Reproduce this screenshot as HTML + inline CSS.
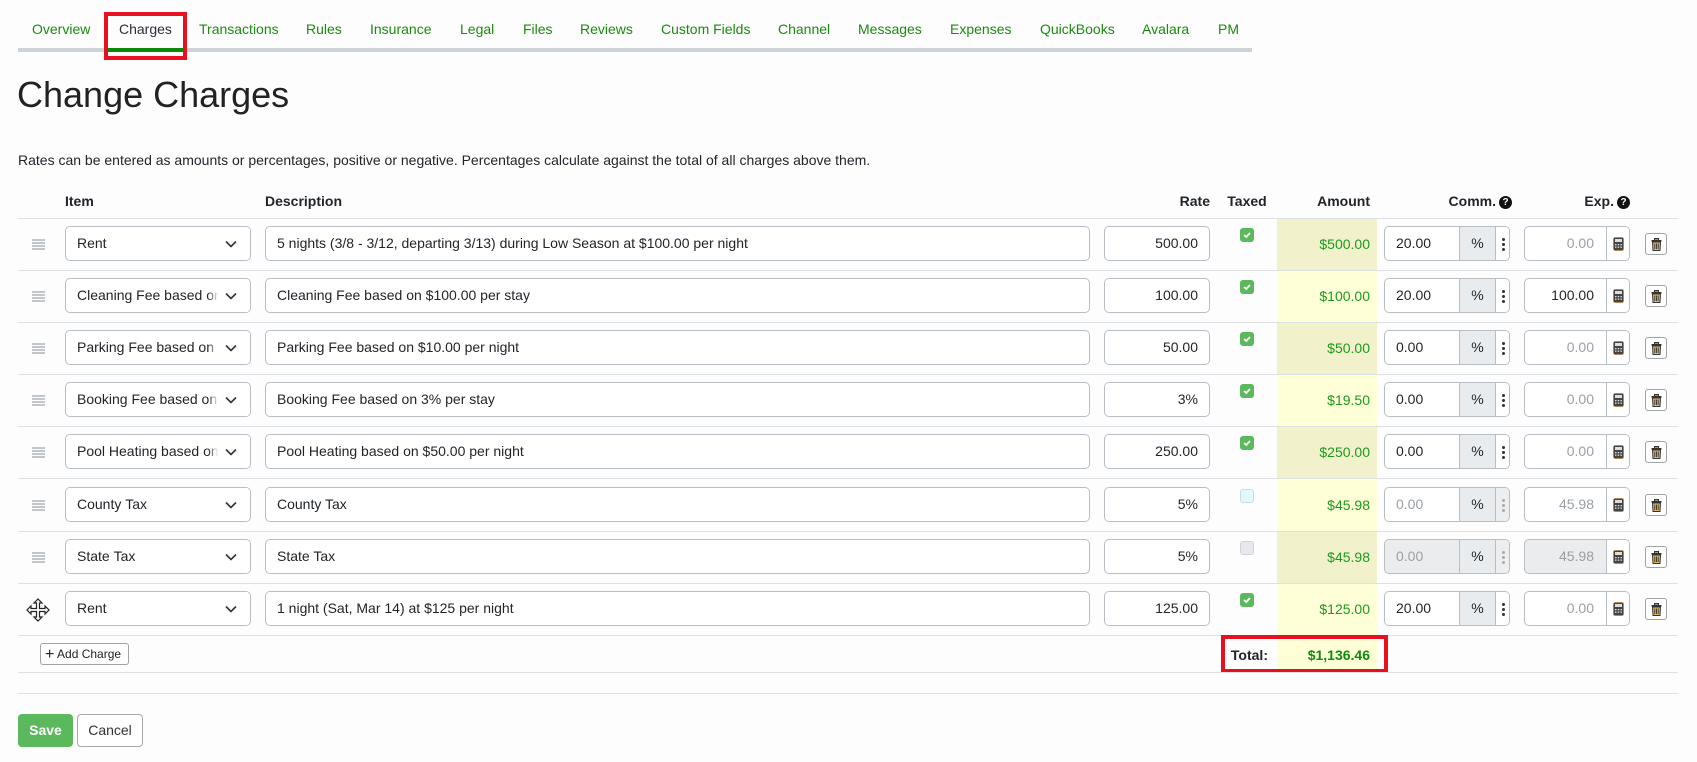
<!DOCTYPE html>
<html><head><meta charset="utf-8"><style>
*{box-sizing:border-box;margin:0;padding:0}
body{width:1697px;height:762px;background:#fdfdfe;font-family:"Liberation Sans",Arial,sans-serif;font-size:14px;color:#212529;position:relative;overflow:hidden}
.a{position:absolute}
.tab{position:absolute;top:21px;color:#1b8a0e;font-size:14px}
.inp{position:absolute;height:35px;border:1px solid #b9bec5;border-radius:5px;background:#fff;line-height:33px;padding:0 11px;white-space:nowrap;overflow:hidden}
.r{text-align:right}
.line{position:absolute;left:18px;width:1660px;height:1px;background:#dde0e4}
.amt{position:absolute;left:1277px;width:100px;text-align:right;padding-right:7px;color:#1d9a1d}
.cb{position:absolute;left:1240px;width:14px;height:14px;border-radius:3px;background:#5cb85c}
.cb svg{position:absolute;left:2px;top:2px}
.th{position:absolute;top:193px;font-weight:bold}
.q{display:inline-block;width:13px;height:13px;border-radius:50%;background:#111;color:#fff;font-size:10px;line-height:13px;text-align:center;vertical-align:1px;margin-left:3px}
</style></head><body>
<div class="a" style="left:18px;top:48px;width:1234px;height:4px;background:#ced3d8"></div>
<div class="a" style="left:108px;top:48px;width:76px;height:4px;background:#0a8a0a"></div>
<div class="tab" style="left:32px">Overview</div>
<div class="tab" style="left:119px;color:#2b2f3a">Charges</div>
<div class="tab" style="left:199px">Transactions</div>
<div class="tab" style="left:306px">Rules</div>
<div class="tab" style="left:370px">Insurance</div>
<div class="tab" style="left:460px">Legal</div>
<div class="tab" style="left:523px">Files</div>
<div class="tab" style="left:580px">Reviews</div>
<div class="tab" style="left:661px">Custom Fields</div>
<div class="tab" style="left:778px">Channel</div>
<div class="tab" style="left:858px">Messages</div>
<div class="tab" style="left:950px">Expenses</div>
<div class="tab" style="left:1040px">QuickBooks</div>
<div class="tab" style="left:1142px">Avalara</div>
<div class="tab" style="left:1218px">PM</div>
<div class="a" style="left:104px;top:12px;width:83px;height:48px;border:4px solid #e8101e"></div>

<div class="a" style="left:17px;top:74px;font-size:36px;color:#222">Change Charges</div>
<div class="a" style="left:18px;top:152px;font-size:14px">Rates can be entered as amounts or percentages, positive or negative. Percentages calculate against the total of all charges above them.</div>

<div class="th" style="left:65px">Item</div>
<div class="th" style="left:265px">Description</div>
<div class="th" style="left:1110px;width:100px;text-align:right">Rate</div>
<div class="th" style="left:1217px;width:60px;text-align:center">Taxed</div>
<div class="th" style="left:1277px;width:93px;text-align:right">Amount</div>
<div class="th" style="left:1400px;width:112px;text-align:right">Comm.<span class="q">?</span></div>
<div class="th" style="left:1520px;width:110px;text-align:right">Exp.<span class="q">?</span></div>
<div class="line" style="top:218px"></div>

<div id="rows"></div>
<script>
const rows=[
["Rent","5 nights (3/8 - 3/12, departing 3/13) during Low Season at $100.00 per night","500.00","c","$500.00","20.00","0.00",0],
["Cleaning Fee based on","Cleaning Fee based on $100.00 per stay","100.00","c","$100.00","20.00","100.00",0],
["Parking Fee based on $","Parking Fee based on $10.00 per night","50.00","c","$50.00","0.00","0.00",0],
["Booking Fee based on","Booking Fee based on 3% per stay","3%","c","$19.50","0.00","0.00",0],
["Pool Heating based on","Pool Heating based on $50.00 per night","250.00","c","$250.00","0.00","0.00",0],
["County Tax","County Tax","5%","b","$45.98","0.00","45.98",1],
["State Tax","State Tax","5%","g","$45.98","0.00","45.98",2],
["Rent","1 night (Sat, Mar 14) at $125 per night","125.00","c","$125.00","20.00","0.00",0]];
let h="";
rows.forEach((r,i)=>{
const t=Math.round(218+52.1*i);const it=t+8;
const bg=i%2==0?"#f1f2cb":"#fefed7";
h+=`<div class="a" style="left:1277px;top:${t+1}px;width:100px;height:52px;background:${bg}"></div>`;
h+=`<div class="line" style="top:${t+52}px"></div>`;
if(i<7){for(let k=0;k<4;k++)h+=`<div class="a" style="left:32px;top:${t+21+k*3}px;width:13px;height:1.5px;background:#c2c6cb"></div>`;}
else h+=`<svg class="a" style="left:26px;top:${t+15}px" width="24" height="24" viewBox="0 0 24 24"><path d="M12 1 L16 5 H13.5 V10.5 H19 V8 L23 12 L19 16 V13.5 H13.5 V19 H16 L12 23 L8 19 H10.5 V13.5 H5 V16 L1 12 L5 8 V10.5 H10.5 V5 H8 Z" fill="#fff" stroke="#222" stroke-width="1.2"/></svg>`;
h+=`<div class="inp" style="left:65px;top:${it}px;width:186px;padding:0"><span class="a" style="left:11px;top:0">${r[0].replace(/ /g,'&nbsp;')}</span><div class="a" style="right:0;top:0;width:42px;height:33px;background:linear-gradient(90deg,rgba(255,255,255,0),#fff 25%)"></div><svg class="a" style="right:13px;top:13px" width="12" height="8" viewBox="0 0 12 8"><path d="M1 1.5 L6 6.5 L11 1.5" fill="none" stroke="#333" stroke-width="1.6"/></svg></div>`;
h+=`<div class="inp" style="left:265px;top:${it}px;width:825px">${r[1]}</div>`;
h+=`<div class="inp r" style="left:1104px;top:${it}px;width:106px">${r[2]}</div>`;
if(r[3]=="c")h+=`<div class="cb" style="top:${t+10}px"><svg width="10" height="10" viewBox="0 0 10 10"><path d="M2 5 L4.2 7 L8 3" fill="none" stroke="#fff" stroke-width="1.8"/></svg></div>`;
else if(r[3]=="b")h+=`<div class="cb" style="top:${t+10}px;background:#e3f8fb;border:1px solid #c8dde2"></div>`;
else h+=`<div class="cb" style="top:${t+10}px;background:#e6e8eb;border:1px solid #cfd3d7"></div>`;
h+=`<div class="amt" style="top:${t+18}px">${r[4]}</div>`;
const dis=r[7]==2;const cbg=dis?"#ebecee":"#fff";const cc=r[7]?"#9aa0a6":"#212529";
const dc=r[7]?'#aaa':'#333';
h+=`<div class="inp" style="left:1384px;top:${it}px;width:126px;padding:0;background:${cbg}"><span class="a" style="left:11px;color:${cc}">${r[5]}</span><span class="a" style="left:74px;top:0;width:36px;height:33px;background:#e9ecef;border-left:1px solid #b9bec5;text-align:center">%</span><span class="a" style="left:110px;top:0;width:16px;height:33px;background:${r[7]?'#eceef0':'#fff'};border-left:1px solid #b9bec5"><i class="a" style="left:6px;top:11px;width:3px;height:3px;border-radius:50%;background:${dc}"></i><i class="a" style="left:6px;top:16px;width:3px;height:3px;border-radius:50%;background:${dc}"></i><i class="a" style="left:6px;top:21px;width:3px;height:3px;border-radius:50%;background:${dc}"></i></span></div>`;
const ec=(r[6]=="100.00")?"#212529":"#9aa0a6";
h+=`<div class="inp" style="left:1524px;top:${it}px;width:106px;padding:0;background:${dis?'#ebecee':'#fff'}"><span class="a" style="right:35px;color:${ec}">${r[6]}</span><span class="a" style="left:81px;top:0;width:24px;height:33px;border-left:1px solid #b9bec5;background:#fff"><svg class="a" style="left:6px;top:10px" width="11" height="14" viewBox="0 0 11 14"><rect x="0.5" y="0.5" width="10" height="13" rx="1.5" fill="#444" stroke="#c07020" stroke-width="0.6"/><rect x="2" y="2" width="7" height="3" fill="#ddd"/><g fill="#ddd"><rect x="2" y="7" width="1.5" height="1.3"/><rect x="4.7" y="7" width="1.5" height="1.3"/><rect x="7.4" y="7" width="1.5" height="1.3"/><rect x="2" y="9.5" width="1.5" height="1.3"/><rect x="4.7" y="9.5" width="1.5" height="1.3"/><rect x="7.4" y="9.5" width="1.5" height="1.3"/></g></svg></span></div>`;
h+=`<div class="a" style="left:1645px;top:${t+15}px;width:22px;height:22px;border:1px solid #9ea3a8;border-radius:3px;background:#fff"><svg class="a" style="left:5px;top:4px" width="11" height="13" viewBox="0 0 11 13"><rect x="3.5" y="0.5" width="4" height="1.5" fill="none" stroke="#333" stroke-width="1"/><rect x="0.5" y="2" width="10" height="1.6" fill="#333"/><path d="M1.5 4 H9.5 L9 12.5 H2 Z" fill="#e8b45a" stroke="#333" stroke-width="1"/><path d="M3.8 5.5 V11 M5.5 5.5 V11 M7.2 5.5 V11" stroke="#333" stroke-width="0.9"/></svg></div>`;
});
document.getElementById("rows").innerHTML=h;
</script>
<div class="a" style="left:1277px;top:635px;width:100px;height:38px;background:#fefed7"></div>
<div class="a" style="left:40px;top:643px;width:89px;height:22px;border:1px solid #9ea3a8;border-radius:3px;background:#fff;font-size:12px;line-height:20px;padding-left:4px;color:#222"><span style="font-size:16px;vertical-align:-1px">+</span> Add Charge</div>
<div class="a" style="left:1200px;top:647px;width:68px;text-align:right;font-weight:bold">Total:</div>
<div class="a" style="left:1277px;top:647px;width:93px;text-align:right;font-weight:bold;color:#0f8a0f">$1,136.46</div>
<div class="a" style="left:1221px;top:635px;width:167px;height:38px;border:4px solid #e8101e"></div>
<div class="line" style="top:672px"></div>
<div class="line" style="top:693px"></div>
<div class="a" style="left:18px;top:714px;width:55px;height:33px;background:#5cb85c;border-radius:4px;color:#fff;text-align:center;line-height:33px;font-weight:bold">Save</div>
<div class="a" style="left:77px;top:714px;width:66px;height:33px;border:1px solid #a5a9ae;border-radius:4px;background:#fff;text-align:center;line-height:31px;color:#333">Cancel</div>
</body></html>
